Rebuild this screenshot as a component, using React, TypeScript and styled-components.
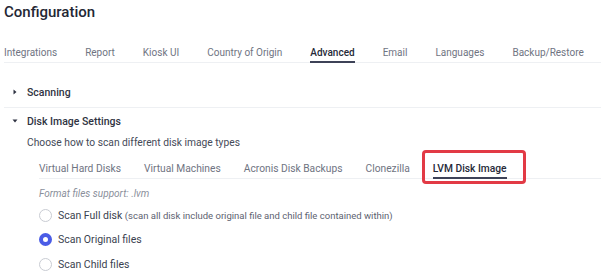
import React, {useState} from 'react';
import styled, {createGlobalStyle} from 'styled-components';

const GlobalStyle = createGlobalStyle`
  html, body {
    margin: 0;
    padding: 0;
    background: #fff;
  }
  body {
    font-family: Roboto, "Liberation Sans", sans-serif;
    color: #3a3f4f;
    -webkit-font-smoothing: antialiased;
  }
`;

const Page = styled.div`
  width: 601px;
  height: 279px;
  overflow: hidden;
  padding-left: 4px;
  box-sizing: border-box;
`;

const Title = styled.h1`
  margin: 0;
  height: 25px;
  line-height: 25px;
  font-size: 15px;
  font-weight: 500;
  color: #232734;
`;

const TabBar = styled.div<{$gap: number; $top: number; $size: number}>`
  display: flex;
  gap: ${(p) => p.$gap}px;
  margin-top: ${(p) => p.$top}px;
  font-size: ${(p) => p.$size}px;
  border-bottom: 1px solid #eef0f3;
`;

const Tab = styled.div<{$active?: boolean}>`
  position: relative;
  height: 17px;
  line-height: 17px;
  color: ${(p) => (p.$active ? '#262a38' : '#6f7482')};
  font-weight: ${(p) => (p.$active ? 500 : 400)};
  border-bottom: 2px solid ${(p) => (p.$active ? '#3d4257' : 'transparent')};
  margin-bottom: -1px;
  white-space: nowrap;
`;

const Highlight = styled.span`
  position: absolute;
  left: -11px;
  right: -19px;
  top: -10px;
  bottom: -7px;
  border: 3px solid #e23a45;
  border-radius: 4px;
  pointer-events: none;
`;

const Section = styled.div<{$divider?: boolean; $top: number}>`
  margin-top: ${(p) => p.$top}px;
  padding-bottom: ${(p) => (p.$divider ? 4 : 0)}px;
  border-bottom: ${(p) => (p.$divider ? '1px solid #eef0f3' : 'none')};
`;

const SectionHead = styled.div`
  display: flex;
  align-items: center;
  height: 22px;
  font-size: 10.5px;
  color: #2f3342;
  font-weight: 500;
`;

const Caret = styled.span`
  width: 23px;
  display: flex;
  justify-content: center;
  padding-right: 2px;
  box-sizing: border-box;
`;

const Body = styled.div`
  padding-left: 23px;
`;

const Hint = styled.div`
  height: 22px;
  line-height: 22px;
  font-size: 10.25px;
  color: #454a58;
`;

const Panel = styled.div`
  padding-left: 12px;
`;

const Note = styled.div`
  margin-top: 6px;
  height: 18px;
  line-height: 18px;
  font-size: 10px;
  font-style: italic;
  color: #8a8f9b;
`;

const RadioRow = styled.label`
  display: flex;
  align-items: center;
  gap: 6px;
  height: 24.5px;
  font-size: 10.5px;
  color: #3a3f4f;
  cursor: pointer;
`;

const Circle = styled.span<{$on?: boolean}>`
  width: 13px;
  height: 13px;
  border-radius: 50%;
  box-sizing: border-box;
  border: ${(p) => (p.$on ? '4px solid #4a5ce6' : '1px solid #c9ccd3')};
  background: #fff;
`;

const Aside = styled.span`
  color: #5d6270;
  font-size: 9.5px;
`;

const Arrow = ({open}: {open?: boolean}) => (
  <svg width="6" height="6" viewBox="0 0 6 6">
    {open ? (
      <polygon points="0.5,1.5 5.5,1.5 3,4.5" fill="#2f3342" />
    ) : (
      <polygon points="1.5,0.5 4.5,3 1.5,5.5" fill="#2f3342" />
    )}
  </svg>
);

const topTabs = ['Integrations', 'Report', 'Kiosk UI', 'Country of Origin', 'Advanced', 'Email', 'Languages', 'Backup/Restore'];
const diskTabs = ['Virtual Hard Disks', 'Virtual Machines', 'Acronis Disk Backups', 'Clonezilla', 'LVM Disk Image'];

export default function App() {
  const [mode, setMode] = useState(1);

  return (
    <Page>
      <GlobalStyle />
      <Title>Configuration</Title>
      <TabBar $top={19} $gap={28} $size={10}>
        {topTabs.map((t) => (
          <Tab key={t} $active={t === 'Advanced'}>
            {t}
          </Tab>
        ))}
      </TabBar>

      <Section $top={18} $divider>
        <SectionHead>
          <Caret>
            <Arrow />
          </Caret>
          Scanning
        </SectionHead>
      </Section>

      <Section $top={2}>
        <SectionHead>
          <Caret>
            <Arrow open />
          </Caret>
          Disk Image Settings
        </SectionHead>
        <Body>
          <Hint>Choose how to scan different disk image types</Hint>
          <Panel>
            <TabBar $top={6} $gap={23} $size={10.25}>
              {diskTabs.map((t) => (
                <Tab key={t} $active={t === 'LVM Disk Image'}>
                  {t}
                  {t === 'LVM Disk Image' && <Highlight />}
                </Tab>
              ))}
            </TabBar>
            <Note>Format files support: .lvm</Note>
            <RadioRow onClick={() => setMode(0)}>
              <Circle $on={mode === 0} />
              <span>
                Scan Full disk <Aside>(scan all disk include original file and child file contained within)</Aside>
              </span>
            </RadioRow>
            <RadioRow onClick={() => setMode(1)}>
              <Circle $on={mode === 1} />
              Scan Original files
            </RadioRow>
            <RadioRow onClick={() => setMode(2)}>
              <Circle $on={mode === 2} />
              Scan Child files
            </RadioRow>
          </Panel>
        </Body>
      </Section>
    </Page>
  );
}
